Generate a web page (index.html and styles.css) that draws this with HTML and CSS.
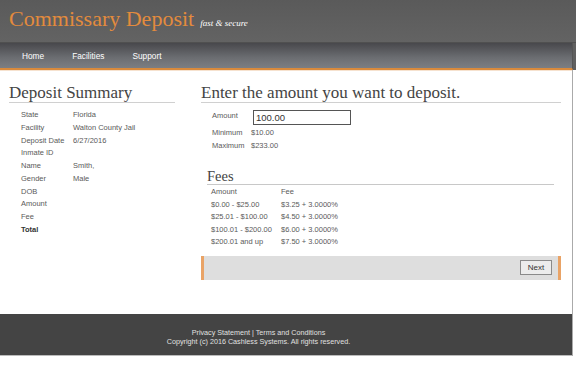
FILE: index.html
```html
<!DOCTYPE html>
<html lang="en">
<head>
    <meta charset="UTF-8">
    <title>Commissary Deposit</title>
    <link rel="stylesheet" href="styles.css">
</head>
<body>
    <div class="top">
        <div class="banner">
            <span class="brand">Commissary Deposit</span>
            <span class="tagline">fast &amp; secure</span>
        </div>
        <div class="nav">
            <a href="#">Home</a>
            <a href="#">Facilities</a>
            <a href="#">Support</a>
        </div>
    </div>
    <div class="page">
        <div class="content">
            <div class="sidebar">
                <h2>Deposit Summary</h2>
                <table class="summary">
                    <tr><td class="key">State</td><td>Florida</td></tr>
                    <tr><td class="key">Facility</td><td>Walton County Jail</td></tr>
                    <tr><td class="key">Deposit Date</td><td>6/27/2016</td></tr>
                    <tr><td class="key">Inmate ID</td><td></td></tr>
                    <tr><td class="key">Name</td><td>Smith,</td></tr>
                    <tr><td class="key">Gender</td><td>Male</td></tr>
                    <tr><td class="key">DOB</td><td></td></tr>
                    <tr><td class="key">Amount</td><td></td></tr>
                    <tr><td class="key">Fee</td><td></td></tr>
                    <tr><td class="key total">Total</td><td></td></tr>
                </table>
            </div>
            <div class="main">
                <h2>Enter the amount you want to deposit.</h2>
                <div class="amount-form">
                    <div class="row row-input">
                        <label for="amount">Amount</label>
                        <input type="text" id="amount" value="100.00">
                    </div>
                    <div class="row"><span class="label">Minimum</span><span>$10.00</span></div>
                    <div class="row"><span class="label">Maximum</span><span>$233.00</span></div>
                </div>
                <div class="fees">
                    <h3>Fees</h3>
                    <table class="fee-table">
                        <tr><td class="range">Amount</td><td>Fee</td></tr>
                        <tr><td class="range">$0.00 - $25.00</td><td>$3.25 + 3.0000%</td></tr>
                        <tr><td class="range">$25.01 - $100.00</td><td>$4.50 + 3.0000%</td></tr>
                        <tr><td class="range">$100.01 - $200.00</td><td>$6.00 + 3.0000%</td></tr>
                        <tr><td class="range">$200.01 and up</td><td>$7.50 + 3.0000%</td></tr>
                    </table>
                </div>
                <div class="actions">
                    <button type="button">Next</button>
                </div>
            </div>
        </div>
        <div class="footer">
            <div><a href="#">Privacy Statement</a> | <a href="#">Terms and Conditions</a></div>
            <div>Copyright (c) 2016 Cashless Systems. All rights reserved.</div>
        </div>
    </div>
</body>
</html>
```

FILE: styles.css
```css
body {
    margin: 0;
    font-family: "Liberation Sans", Arial, sans-serif;
    font-size: 7.5px;
    color: #5a5a5a;
    background: #fff;
}
.top {
    background: #606060;
}
.banner {
    height: 43px;
    padding-left: 9px;
    box-sizing: border-box;
    display: flex;
    align-items: baseline;
    padding-top: 6px;
    background: linear-gradient(#5a5a5a, #636363);
    border-bottom: 1px solid #505050;
}
.brand {
    font-family: "Liberation Serif", "Times New Roman", serif;
    font-size: 22px;
    color: #e38b3d;
}
.tagline {
    font-family: "Liberation Serif", "Times New Roman", serif;
    font-style: italic;
    font-size: 9px;
    color: #fff;
    margin-left: 6px;
}
.nav {
    width: 572px;
    height: 25px;
    display: flex;
    align-items: center;
    background: linear-gradient(#48484c, #6c6e72 60%, #7c7e82);
    border-right: 1px solid #555;
    border-bottom: 2px solid #d98a3c;
    box-shadow: 0 1px 0 #f6e2cf;
}
.nav a {
    color: #fff;
    font-size: 8.3px;
    text-decoration: none;
    margin-left: 22px;
}
.nav a + a {
    margin-left: 28px;
}
.page {
    width: 572px;
    border-right: 1px solid #aaa;
}
.content {
    display: flex;
    padding-bottom: 34px;
}
h2 {
    font-family: "Liberation Serif", "Times New Roman", serif;
    font-weight: normal;
    font-size: 17px;
    line-height: 18px;
    color: #444;
    margin: 0;
    padding-top: 14px;
    border-bottom: 1px solid #d0d0d0;
}
.sidebar {
    width: 166px;
    margin-left: 9px;
}
.summary {
    border-collapse: collapse;
    margin: 6px 0 0 12px;
}
.summary td {
    padding: 0;
    height: 12.75px;
    line-height: 12.75px;
}
.summary .key {
    width: 52px;
}
.summary .total {
    font-weight: bold;
    color: #333;
}
.main {
    width: 360px;
    margin-left: 26px;
}
.amount-form {
    padding: 7px 0 0 11px;
}
.row {
    display: flex;
    height: 13px;
    align-items: center;
}
.row-input {
    height: 16px;
    align-items: flex-start;
}
.row .label, .row label {
    width: 39px;
}
.row label {
    line-height: 11px;
}
.row input {
    width: 98px;
    height: 15px;
    box-sizing: border-box;
    border: 1px solid #555;
    padding: 0 2px;
    margin: 0 0 0 2px;
    font-family: "Liberation Sans", Arial, sans-serif;
    font-size: 9.5px;
    color: #333;
}
.fees {
    margin: 17px 7px 0 6px;
}
h3 {
    font-family: "Liberation Serif", "Times New Roman", serif;
    font-weight: normal;
    font-size: 14.5px;
    line-height: 15px;
    color: #444;
    margin: 0;
    border-bottom: 1px solid #c8c8c8;
}
.fee-table {
    border-collapse: collapse;
    margin: 1px 0 0 4px;
}
.fee-table td {
    padding: 0;
    height: 12.5px;
    line-height: 12.5px;
}
.fee-table .range {
    width: 70px;
}
.actions {
    margin-top: 7px;
    height: 24px;
    display: flex;
    align-items: center;
    justify-content: flex-end;
    padding-right: 6px;
    background: #dedede;
    border-left: 3px solid #e9a366;
    border-right: 3px solid #e9a366;
}
.actions button {
    width: 32px;
    height: 15px;
    padding: 0;
    font-family: "Liberation Sans", Arial, sans-serif;
    font-size: 8px;
    color: #333;
    background: #ececec;
    border: 1px solid #8a8a8a;
}
.footer {
    height: 42px;
    box-sizing: border-box;
    padding: 14px 55px 0 0;
    background: #444;
    border-bottom: 1px solid #bbb;
    text-align: center;
    color: #e0e0e0;
    font-size: 7.2px;
    line-height: 9.5px;
}
.footer a {
    color: #e0e0e0;
    text-decoration: none;
}
```
